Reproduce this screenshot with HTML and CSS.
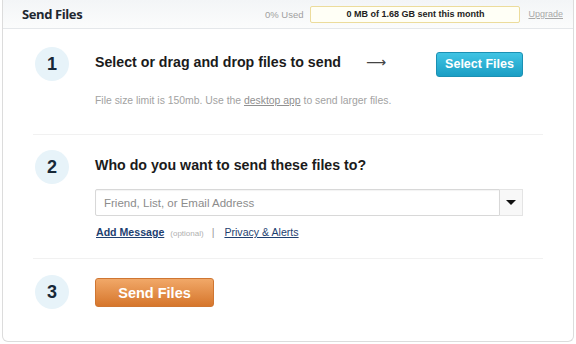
FILE: index.html
```html
<!DOCTYPE html>
<html>
<head>
<meta charset="utf-8">
<link rel="stylesheet" href="styles.css">
</head>
<body>
<div class="card">
  <div class="header">
    <div class="title">Send Files</div>
    <div class="usage">
      <span class="pct">0% Used</span>
      <span class="meter">0 MB of 1.68 GB sent this month</span>
      <a class="upgrade" href="#">Upgrade</a>
    </div>
  </div>

  <div class="step step1">
    <div class="num">1</div>
    <div class="body">
      <div class="row">
        <h2>Select or drag and drop files to send</h2>
        <span class="arrow">&#10230;</span>
        <button class="btn-blue">Select Files</button>
      </div>
      <p class="note">File size limit is 150mb. Use the <a href="#">desktop app</a> to send larger files.</p>
    </div>
  </div>

  <div class="step step2">
    <div class="num">2</div>
    <div class="body">
      <div class="row">
        <h2>Who do you want to send these files to?</h2>
      </div>
      <div class="field">
        <div class="input">Friend, List, or Email Address</div>
        <div class="drop"><span class="tri"></span></div>
      </div>
      <div class="links">
        <a class="addmsg" href="#">Add Message</a>
        <span class="opt">(optional)</span>
        <span class="sep">|</span>
        <a class="priv" href="#">Privacy &amp; Alerts</a>
      </div>
    </div>
  </div>

  <div class="step step3">
    <div class="num">3</div>
    <div class="body">
      <button class="btn-orange">Send Files</button>
    </div>
  </div>
</div>
</body>
</html>
```

FILE: styles.css
```css
* { box-sizing: border-box; }
html, body { margin: 0; padding: 0; background: #fff; }
body { font-family: "Liberation Sans", Arial, sans-serif; color: #222; }

.card {
  margin: 0 2px;
  width: 572px;
  height: 342px;
  border: 1px solid #dcdcdc;
  border-top: none;
  border-radius: 0 0 6px 6px;
  background: #fff;
}

.header {
  height: 29px;
  display: flex;
  align-items: center;
  justify-content: space-between;
  padding: 0 10px 0 19px;
  background: linear-gradient(#f3f5f7, #fbfcfc);
  border-bottom: 1px solid #e4e7ea;
}
.title {
  font-family: "Open Sans", "Liberation Sans", sans-serif;
  font-weight: 700;
  font-size: 13px;
  color: #1f2830;
  letter-spacing: -0.4px;
}
.usage { display: flex; align-items: center; font-size: 9px; }
.pct { color: #a0a0a0; margin-right: 7px; font-size: 9.5px; }
.meter {
  width: 210px;
  height: 17px;
  border: 1px solid #ecdc9c;
  background: #fffff6;
  border-radius: 2px;
  display: flex;
  align-items: center;
  justify-content: center;
  font-weight: 700;
  color: #222;
}
.upgrade { color: #a8a8a8; margin-left: 8px; text-decoration: underline; }

.step {
  margin: 0 30px;
  display: flex;
  border-bottom: 1px solid #f1f1f1;
}
.step3 { border-bottom: none; }
.num {
  flex: none;
  width: 34px;
  height: 34px;
  margin-left: 2px;
  border-radius: 50%;
  background: #e7f3f9;
  color: #172838;
  font-weight: 700;
  font-size: 18px;
  display: flex;
  align-items: center;
  justify-content: center;
}
.body { flex: 1; margin-left: 26px; padding-right: 20px; }
.row { display: flex; align-items: center; height: 34px; }
h2 { margin: 0 0 5px; font-size: 14.2px; font-weight: 700; color: #1b1b1b; }
.arrow { margin: 0 0 5px 25px; font-size: 14px; line-height: 1; color: #444; font-family: "DejaVu Sans", sans-serif; }
.btn-blue {
  margin-left: auto;
  width: 87px;
  height: 25px;
  border: 1px solid #1b90b3;
  border-radius: 3px;
  background: linear-gradient(#40c4e4, #1a9ec4);
  color: #fff;
  font-family: "Liberation Sans", Arial, sans-serif;
  font-weight: 700;
  font-size: 12.5px;
  padding: 0;
}

.step1 { padding-top: 18px; height: 106px; }
.note { margin: 14px 0 0; font-size: 10.4px; color: #a2a2a2; }
.note a { color: #909090; text-decoration: underline; }

.step2 { padding-top: 15px; height: 124px; }
.field { display: flex; margin-top: 5px; height: 27px; }
.input {
  flex: 1;
  border: 1px solid #d8d8d8;
  border-radius: 2px 0 0 2px;
  font-size: 11.5px;
  color: #8c8c8c;
  display: flex;
  align-items: center;
  padding-left: 8px;
  box-shadow: inset 0 1px 1px rgba(0,0,0,0.05);
}
.drop {
  width: 23px;
  border: 1px solid #e4e4e4;
  border-left: none;
  background: #f8f8f8;
  display: flex;
  align-items: center;
  justify-content: center;
}
.tri {
  width: 0; height: 0;
  border-left: 5px solid transparent;
  border-right: 5px solid transparent;
  border-top: 5px solid #111;
}
.links { margin-top: 10px; font-size: 10.6px; display: flex; align-items: baseline; }
.addmsg { color: #1e3f70; font-weight: 700; text-decoration: underline; margin-left: 1px; }
.opt { font-size: 8px; color: #b0b0b0; margin-left: 6px; }
.sep { color: #999; margin: 0 10px 0 8px; }
.priv { color: #1e3f70; text-decoration: underline; }

.step3 { padding-top: 16px; }
.btn-orange {
  margin-top: 3px;
  width: 119px;
  height: 29px;
  border: 1px solid #cf7632;
  border-radius: 3px;
  background: linear-gradient(#f1a868, #d6762c);
  color: #fff;
  font-family: "Liberation Sans", Arial, sans-serif;
  font-weight: 700;
  font-size: 14.5px;
  padding: 0;
}
```
